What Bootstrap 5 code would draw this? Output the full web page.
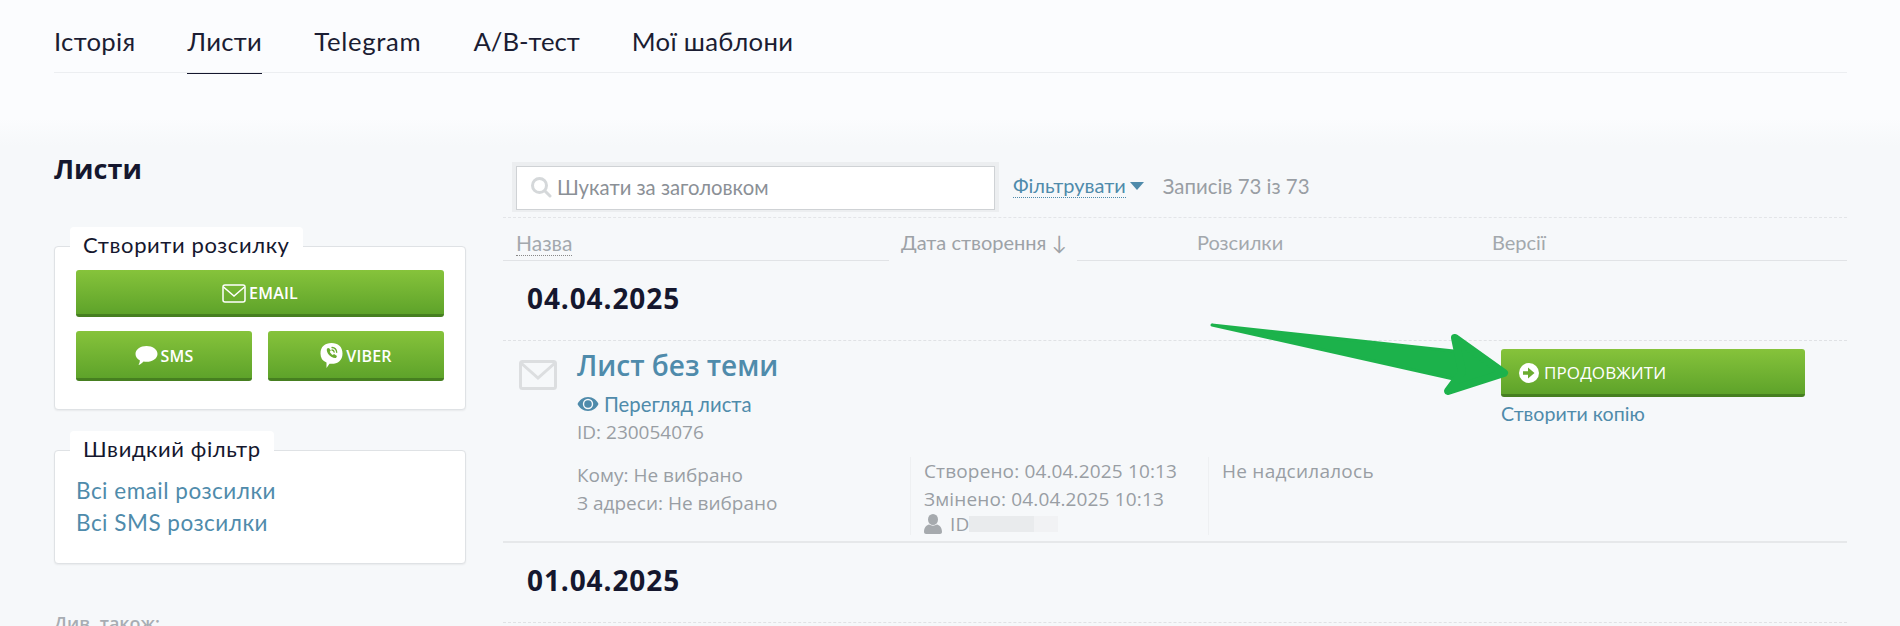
<!DOCTYPE html>
<html lang="uk">
<head>
<meta charset="utf-8">
<title>Листи</title>
<link href="https://cdn.jsdelivr.net/npm/bootstrap@5.3.0/dist/css/bootstrap.min.css" rel="stylesheet">
<style>
html,body{height:626px;overflow:hidden}
body{background:#f6f8fa;font-family:"Open Sans","Noto Sans",sans-serif;color:#15172e;position:relative}
.topzone{height:146px;padding:0 53px 0 54px;background:linear-gradient(#fbfcfe 0,#fbfcfe 118px,#f6f8fa 146px)}
.tabbar{height:73px;border-bottom:1px solid #eceef1}
.tabbar a{color:#1b1d33;font-size:25.700px;letter-spacing:.3px;line-height:30px;padding:26px 0 16px;height:74px;text-decoration:none;font-family:Lato,"Open Sans",sans-serif;margin-right:52px}
.tabbar a.on{border-bottom:1px solid #15172e}
.tabbar a.wide-latin{letter-spacing:.7px}
.tabbar a.tight-tab{letter-spacing:0}
.shell{padding:0 53px 0 54px;gap:37px}
.sidecol{width:412px;flex:none}
.pagehead{font-size:27px;font-weight:700;line-height:34px;margin:6px 0 60px}
.panel{background:#fff;border:1px solid #dfe2e5;border-radius:4px;box-shadow:0 1px 2px rgba(0,0,0,.06);position:relative;padding:23px 21px 0}
.panel-a{height:164px;margin-bottom:40px}
.panel-b{height:114px;padding-top:24px}
.legendtag{position:absolute;left:15px;top:-20px;background:#fff;padding:3px 13px;font-size:22px;letter-spacing:.6px;line-height:29px;border-radius:4px 4px 0 0;font-family:Lato,sans-serif}
.greenbtn{background:linear-gradient(#86c33b,#5ea32a);border:0;border-bottom:3px solid #467f20;border-radius:3px;color:#fff;font-size:16px;letter-spacing:.2px;font-weight:600;display:flex;align-items:center;justify-content:center;gap:3px;padding:2px 0 0;font-family:"Open Sans",sans-serif}
.greenbtn:hover{color:#fff}
.btn-mail{height:47px;width:100%;margin-bottom:14px}
.btn-half{height:50px;flex:1}
.bluelink{color:#4f8bab;text-decoration:none}
.quick{display:block;font-size:22.500px;letter-spacing:.5px;line-height:32px;font-family:Lato,sans-serif}
.seealso{font-size:18px;color:#a8adb3;font-weight:600;margin-top:47px;line-height:24px}
.maincol{flex:1;min-width:0;padding-top:16px;position:relative}
.toolbar{height:56px;padding-left:9px;gap:14px;border-bottom:1px dashed #e3e5e8}
.searchwrap{width:487px;height:50px;border:4px solid #eceef0;border-bottom-width:5px;background:#eceef0}
.searchbox{height:44px;background:#fff;border:1px solid #cfd2d5;display:flex;align-items:center;gap:5px;padding:0 0 2px 13px;color:#8b9096;font-size:20.300px;font-family:Lato,sans-serif}
.filterlink{color:#4f8bab;font-size:20px;border-bottom:1px dotted #4f8bab;line-height:23px;text-decoration:none;font-family:Lato,sans-serif}
.counter{color:#999ea4;font-size:20.400px;font-family:Lato,sans-serif;margin-left:5px}
.toolcell{height:48px}
.headrow{height:43px;color:#a3a8ad;font-size:20px;font-family:Lato,sans-serif}
.hc{display:flex;align-items:center;border-bottom:1px solid #e1e3e6;height:43px;padding-top:5px}
.hc-name{width:386px;padding-left:13px}
.hc-name span{border-bottom:1px dotted #888;line-height:25px;font-size:21px;margin-top:2px}
.hc-date{width:188px;border-bottom:0;padding-left:12px;color:#9da2a7}
.hc-send{width:415px;padding-left:120px}
.hc-ver{flex:1}
.dategroup{height:80px;padding:0 0 5px 24px;display:flex;align-items:center;font-size:28px;letter-spacing:.9px;font-weight:700;border-bottom:1px dashed #e0e2e5;color:#15172e}
.msgrow{height:202px;border-bottom:2px solid #e6e8ea;position:relative;display:flex}
.envcell{width:74px;padding:19px 0 0 16px;flex:none}
.infocell{width:333px;padding-top:5px;flex:none}
.msgtitle{font-size:28px;font-weight:600;line-height:38px;color:#4f8bab;text-decoration:none;display:block;margin-bottom:6px}
.graytxt{color:#999ea4;font-size:19px;font-family:"Open Sans",sans-serif;line-height:28px;white-space:nowrap}
.viewlink{font-size:20.300px;line-height:28px;display:flex;align-items:center;gap:5px;font-family:Lato,sans-serif}
.mb15{margin-bottom:15px;margin-top:0}
.whencell{width:298px;padding:48px 0 0 14px;flex:none;position:relative}
.whencell .graytxt{letter-spacing:.15px}
.whencell .divline,.sentcell .divline{position:absolute;left:0;top:116px;bottom:6px;border-left:1px solid #eef0f2}
.authorline{display:flex;align-items:center;gap:8px;line-height:20px;margin-top:1px}
.maskbar{display:inline-block;width:65px;height:16px;background:#e9ebed;margin-left:-8px;box-shadow:24px 0 0 #f1f2f4}
.sentcell{padding:116px 0 0 14px;flex:none;width:293px;position:relative}
.sentcell .graytxt{letter-spacing:.25px}
.actcell{position:absolute;left:998px;top:8px;width:304px}
.btn-go{height:48px;width:304px;justify-content:flex-start;padding-left:18px;font-size:17px;letter-spacing:.1px;font-weight:500;gap:5px}
.copylink{display:block;font-size:19.600px;line-height:24px;margin-top:5px;font-family:Lato,sans-serif}
.arrowlay{position:absolute;left:0;top:0;pointer-events:none}
</style>
</head>
<body>
<div class="topzone">
  <nav class="tabbar d-flex">
    <a href="#">Історія</a><a href="#" class="on">Листи</a><a href="#" class="wide-latin">Telegram</a><a href="#" class="tight-tab">A/B-тест</a><a href="#">Мої шаблони</a>
  </nav>
</div>
<div class="shell d-flex">
  <aside class="sidecol">
    <h1 class="pagehead">Листи</h1>
    <div class="panel panel-a">
      <div class="legendtag">Створити розсилку</div>
      <button class="btn greenbtn btn-mail" type="button">
        <svg width="24" height="19" viewBox="0 0 24 19" fill="none" stroke="#fff" stroke-width="1.5"><rect x="1" y="1" width="22" height="17" rx="2"/><path d="M1.5 3 12 12 22.5 3"/></svg>EMAIL
      </button>
      <div class="d-flex gap-3">
        <button class="btn greenbtn btn-half" type="button">
          <svg width="23" height="21" viewBox="0 0 23 21" fill="#fff"><path d="M11.5 1C17.6 1 22.5 4.5 22.5 8.9S17.6 16.8 11.5 16.8c-1 0-2-.1-2.9-.3C7.3 18 5.500 19.400 3.500 20c.9-1.500 1.400-3 1.300-4.700C2.300 13.900.5 11.600.5 8.900.5 4.500 5.400 1 11.500 1Z"/></svg>SMS
        </button>
        <button class="btn greenbtn btn-half" type="button">
          <svg width="23" height="27" viewBox="0 0 23 27"><path fill="#fff" d="M11.500 1C18 1 22.500 4.500 22.500 11.500S18 21.800 11.500 21.800c-.7 0-1.400 0-2-.1L6.500 26v-5.500C2.500 19 .5 16 .5 11.500.5 4.500 5 1 11.500 1Z"/><path fill="#6bac2f" d="M7 6.500c-1.500 4 4.500 10.500 9 9.500l1-2-3-2-1.200 1c-1.300-.6-2.500-1.900-3-3.200l1-1.200-1.800-2.600Z"/><path fill="none" stroke="#6bac2f" stroke-width="1.300" stroke-linecap="round" d="M12 5.500c2.700.2 4.500 2 4.700 4.800M12 8c1.200.1 2 .9 2.200 2.200"/></svg>VIBER
        </button>
      </div>
    </div>
    <div class="panel panel-b">
      <div class="legendtag">Швидкий фільтр</div>
      <a href="#" class="quick bluelink">Всі email розсилки</a>
      <a href="#" class="quick bluelink">Всі SMS розсилки</a>
    </div>
    <div class="seealso">Див. також:</div>
  </aside>
  <main class="maincol">
    <div class="toolbar d-flex align-items-start">
      <div class="searchwrap">
        <div class="searchbox">
          <svg width="22" height="22" viewBox="0 0 22 22" fill="none" stroke="#d5d8da" stroke-width="3"><circle cx="9.500" cy="9.500" r="7"/><path stroke-linecap="round" d="M15 15l5 5"/></svg>Шукати за заголовком
        </div>
      </div>
      <div class="toolcell d-flex align-items-center gap-1">
        <a href="#" class="filterlink">Фільтрувати</a>
        <svg width="14" height="8" viewBox="0 0 14 8" fill="#4f8bab"><path d="M0 0h14L7 8Z"/></svg>
      </div>
      <div class="toolcell counter d-flex align-items-center">Записів 73 із 73</div>
    </div>
    <div class="headrow d-flex">
      <div class="hc hc-name"><span>Назва</span></div>
      <div class="hc hc-date">Дата створення ↓</div>
      <div class="hc hc-send">Розсилки</div>
      <div class="hc hc-ver">Версії</div>
    </div>
    <div class="dategroup">04.04.2025</div>
    <div class="msgrow">
      <div class="envcell">
        <svg width="38" height="30" viewBox="0 0 38 30" fill="none" stroke="#dcdee0" stroke-width="3"><rect x="1.500" y="1.500" width="35" height="27" rx="2"/><path d="M2 3l17 15L36 3"/></svg>
      </div>
      <div class="infocell">
        <a href="#" class="msgtitle">Лист без теми</a>
        <a href="#" class="viewlink bluelink">
          <svg width="22" height="16" viewBox="0 0 22 16"><path fill="#4f8bab" d="M11 1C6 1 2.500 4 .5 8c2 4 5.500 7 10.500 7s8.500-3 10.500-7C19.500 4 16 1 11 1Z"/><circle cx="11" cy="8" r="5.200" fill="#f6f8fa"/><circle cx="11" cy="8" r="3.800" fill="#4f8bab"/></svg>Перегляд листа
        </a>
        <div class="graytxt mb15">ID: 230054076</div>
        <div class="graytxt">Кому: Не вибрано</div>
        <div class="graytxt">З адреси: Не вибрано</div>
      </div>
      <div class="whencell">
        <div class="divline"></div>
        <div style="height:68px"></div>
        <div class="graytxt">Створено: 04.04.2025 10:13</div>
        <div class="graytxt">Змінено: 04.04.2025 10:13</div>
        <div class="graytxt authorline">
          <svg width="18" height="20" viewBox="0 0 18 20" fill="#a6aaae"><ellipse cx="9" cy="5.500" rx="5" ry="5.500"/><path d="M0 18c0-5 3-7 5-7.500 2.500 1.500 5.500 1.500 8 0 2 .5 5 2.500 5 7.500 0 1-1 2-2 2H2c-1 0-2-1-2-2Z"/></svg>
          <span>ID</span><span class="maskbar"></span>
        </div>
      </div>
      <div class="sentcell">
        <div class="divline"></div>
        <div class="graytxt">Не надсилалось</div>
      </div>
      <div class="actcell">
        <button class="btn greenbtn btn-go" type="button">
          <svg width="20" height="20" viewBox="0 0 20 20"><circle cx="10" cy="10" r="10" fill="#fff"/><path fill="#6bac2f" d="M4 8.200h5V4.500L15.500 10 9 15.500v-3.700H4Z"/></svg>ПРОДОВЖИТИ
        </button>
        <a href="#" class="copylink bluelink">Створити копію</a>
      </div>
    </div>
    <div class="dategroup">01.04.2025</div>
  </main>
</div>
<svg class="arrowlay" width="1900" height="626" viewBox="0 0 1900 626" fill="#1cb24b" stroke="#1cb24b" stroke-linejoin="round"><path stroke-width="3" d="M1212 325 1463 352 1470 372 1458 380Z"/><path stroke-width="8" d="M1455 338 1504 373 1448 391 1462 372Z"/></svg>
</body>
</html>
